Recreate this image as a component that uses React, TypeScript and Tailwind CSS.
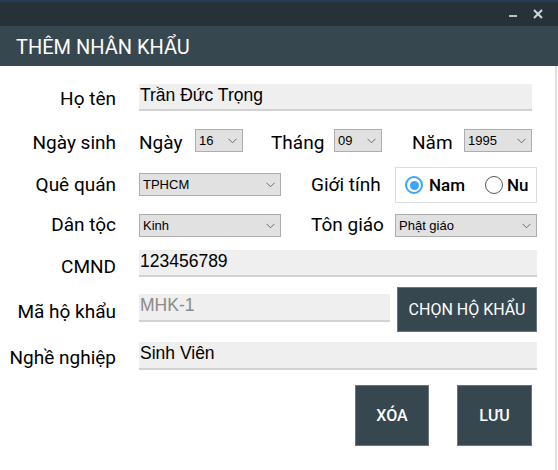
import React from "react";

const Chevron = () => (
  <svg width="9" height="6" viewBox="0 0 9 6" className="shrink-0">
    <path d="M0.5 0.8 L4.5 4.8 L8.5 0.8" fill="none" stroke="#6a6a6a" strokeWidth="1" />
  </svg>
);

function Select({ value, className }: { value: string; className: string }) {
  return (
    <div
      className={
        "flex items-center justify-between bg-[#e1e1e1] border border-[#adadad] pl-[3px] pr-[5px] text-[13px] text-black " +
        className
      }
      style={{ fontFamily: '"Liberation Sans", Arial, sans-serif' }}
    >
      <span className="leading-none">{value}</span>
      <Chevron />
    </div>
  );
}

function Input({ value, className, muted }: { value: string; className: string; muted?: boolean }) {
  return (
    <div
      className={
        "bg-[#efefef] border-b-2 border-[#d2d2d2] pl-[1px] pt-[1px] text-[17.5px] leading-[20px] " +
        (muted ? "text-[#8a8a8a] " : "text-black ") +
        className
      }
      style={{ fontFamily: '"Liberation Sans", Arial, sans-serif' }}
    >
      {value}
    </div>
  );
}

function Label({ text, mt }: { text: string; mt: string }) {
  return (
    <div className={"w-[116px] shrink-0 text-right text-[19px] leading-[20px] text-black whitespace-nowrap " + mt}>
      {text}
    </div>
  );
}

export default function App() {
  return (
    <div
      className="w-[558px] h-[470px] bg-white overflow-hidden flex flex-col"
      style={{ fontFamily: 'Roboto, "Noto Sans", sans-serif' }}
    >
      {/* top strip */}
      <div className="h-[2px] bg-[#283a57]" />
      {/* title bar */}
      <div className="h-[24px] bg-[#263238] flex items-start justify-end">
        <div className="mt-[13px] mr-[16px] w-[8px] h-[2px] bg-[#b7c2c8]" />
        <svg width="10" height="10" viewBox="0 0 10 10" className="mt-[7px] mr-[15px]">
          <path d="M1 1 L9 9 M9 1 L1 9" stroke="#cfd8dc" strokeWidth="2" />
        </svg>
      </div>
      {/* header */}
      <div className="h-[40px] bg-[#37474f] flex items-center pl-[16px]">
        <span className="text-white text-[20px] leading-none mt-[1px]">THÊM NHÂN KHẨU</span>
      </div>

      {/* body */}
      <div className="flex-1 w-[557px] border-r-2 border-[#e0e0e0] flex flex-col">
        {/* Row 1 */}
        <div className="flex items-start mt-[18px] h-[26px]">
          <Label text="Họ tên" mt="mt-[5px]" />
          <Input value="Trần Đức Trọng" className="ml-[23px] w-[393px] h-[27px]" />
        </div>

        {/* Row 2 */}
        <div className="flex items-start mt-[19px] h-[23px]">
          <Label text="Ngày sinh" mt="mt-[4px]" />
          <div className="ml-[23px] w-[56px] text-[19px] leading-[20px] mt-[4px]">Ngày</div>
          <Select value="16" className="w-[48px] h-[23px]" />
          <div className="ml-[28px] w-[63px] text-[19px] leading-[20px] mt-[4px]">Tháng</div>
          <Select value="09" className="w-[48px] h-[23px]" />
          <div className="ml-[30px] w-[52px] text-[19px] leading-[20px] mt-[4px]">Năm</div>
          <Select value="1995" className="w-[68px] h-[23px]" />
        </div>

        {/* Row 3 */}
        <div className="flex items-start mt-[15px] h-[36px]">
          <Label text="Quê quán" mt="mt-[8px]" />
          <Select value="TPHCM" className="ml-[23px] mt-[6px] w-[142px] h-[23px]" />
          <div className="ml-[30px] w-[84px] text-[19px] leading-[20px] mt-[8px] whitespace-nowrap">Giới tính</div>
          <div className="w-[142px] h-[36px] border border-[#dedede] flex items-center pl-[9px]">
            <div className="w-[18px] h-[18px] rounded-full border-2 border-[#3aa6f5] flex items-center justify-center">
              <div className="w-[9px] h-[9px] rounded-full bg-[#3aa6f5]" />
            </div>
            <span className="ml-[6px] text-[17px] font-medium leading-none">Nam</span>
            <div className="ml-[20px] w-[18px] h-[18px] rounded-full border-[1.5px] border-[#555]" />
            <span className="ml-[4px] text-[17px] font-medium leading-none">Nu</span>
          </div>
        </div>

        {/* Row 4 */}
        <div className="flex items-start mt-[11px] h-[23px]">
          <Label text="Dân tộc" mt="mt-[1px]" />
          <Select value="Kinh" className="ml-[23px] w-[142px] h-[23px]" />
          <div className="ml-[30px] w-[84px] text-[19px] leading-[20px] mt-[1px] whitespace-nowrap">Tôn giáo</div>
          <Select value="Phật giáo" className="w-[142px] h-[23px]" />
        </div>

        {/* Row 5 */}
        <div className="flex items-start mt-[13px] h-[27px]">
          <Label text="CMND" mt="mt-[7px]" />
          <Input value="123456789" className="ml-[23px] w-[398px] h-[27px]" />
        </div>

        {/* Row 6 */}
        <div className="flex items-start mt-[10px] h-[45px]">
          <Label text="Mã hộ khẩu" mt="mt-[15px]" />
          <Input value="MHK-1" muted className="ml-[23px] mt-[7px] w-[251px] h-[28px]" />
          <div className="ml-[7px] w-[140px] h-[45px] bg-[#37474f] border border-[#68777f] flex items-center justify-center text-white text-[16px]">
            CHỌN HỘ KHẨU
          </div>
        </div>

        {/* Row 7 */}
        <div className="flex items-start mt-[10px] h-[28px]">
          <Label text="Nghề nghiệp" mt="mt-[6px]" />
          <Input value="Sinh Viên" className="ml-[23px] w-[398px] h-[28px]" />
        </div>

        {/* Buttons */}
        <div className="flex items-start mt-[15px]">
          <div className="ml-[355px] w-[74px] h-[61px] bg-[#37474f] border border-[#68777f] flex items-center justify-center text-white text-[16px] font-medium">
            XÓA
          </div>
          <div className="ml-[28px] w-[75px] h-[61px] bg-[#37474f] border border-[#68777f] flex items-center justify-center text-white text-[16px] font-medium">
            LƯU
          </div>
        </div>
      </div>
    </div>
  );
}
